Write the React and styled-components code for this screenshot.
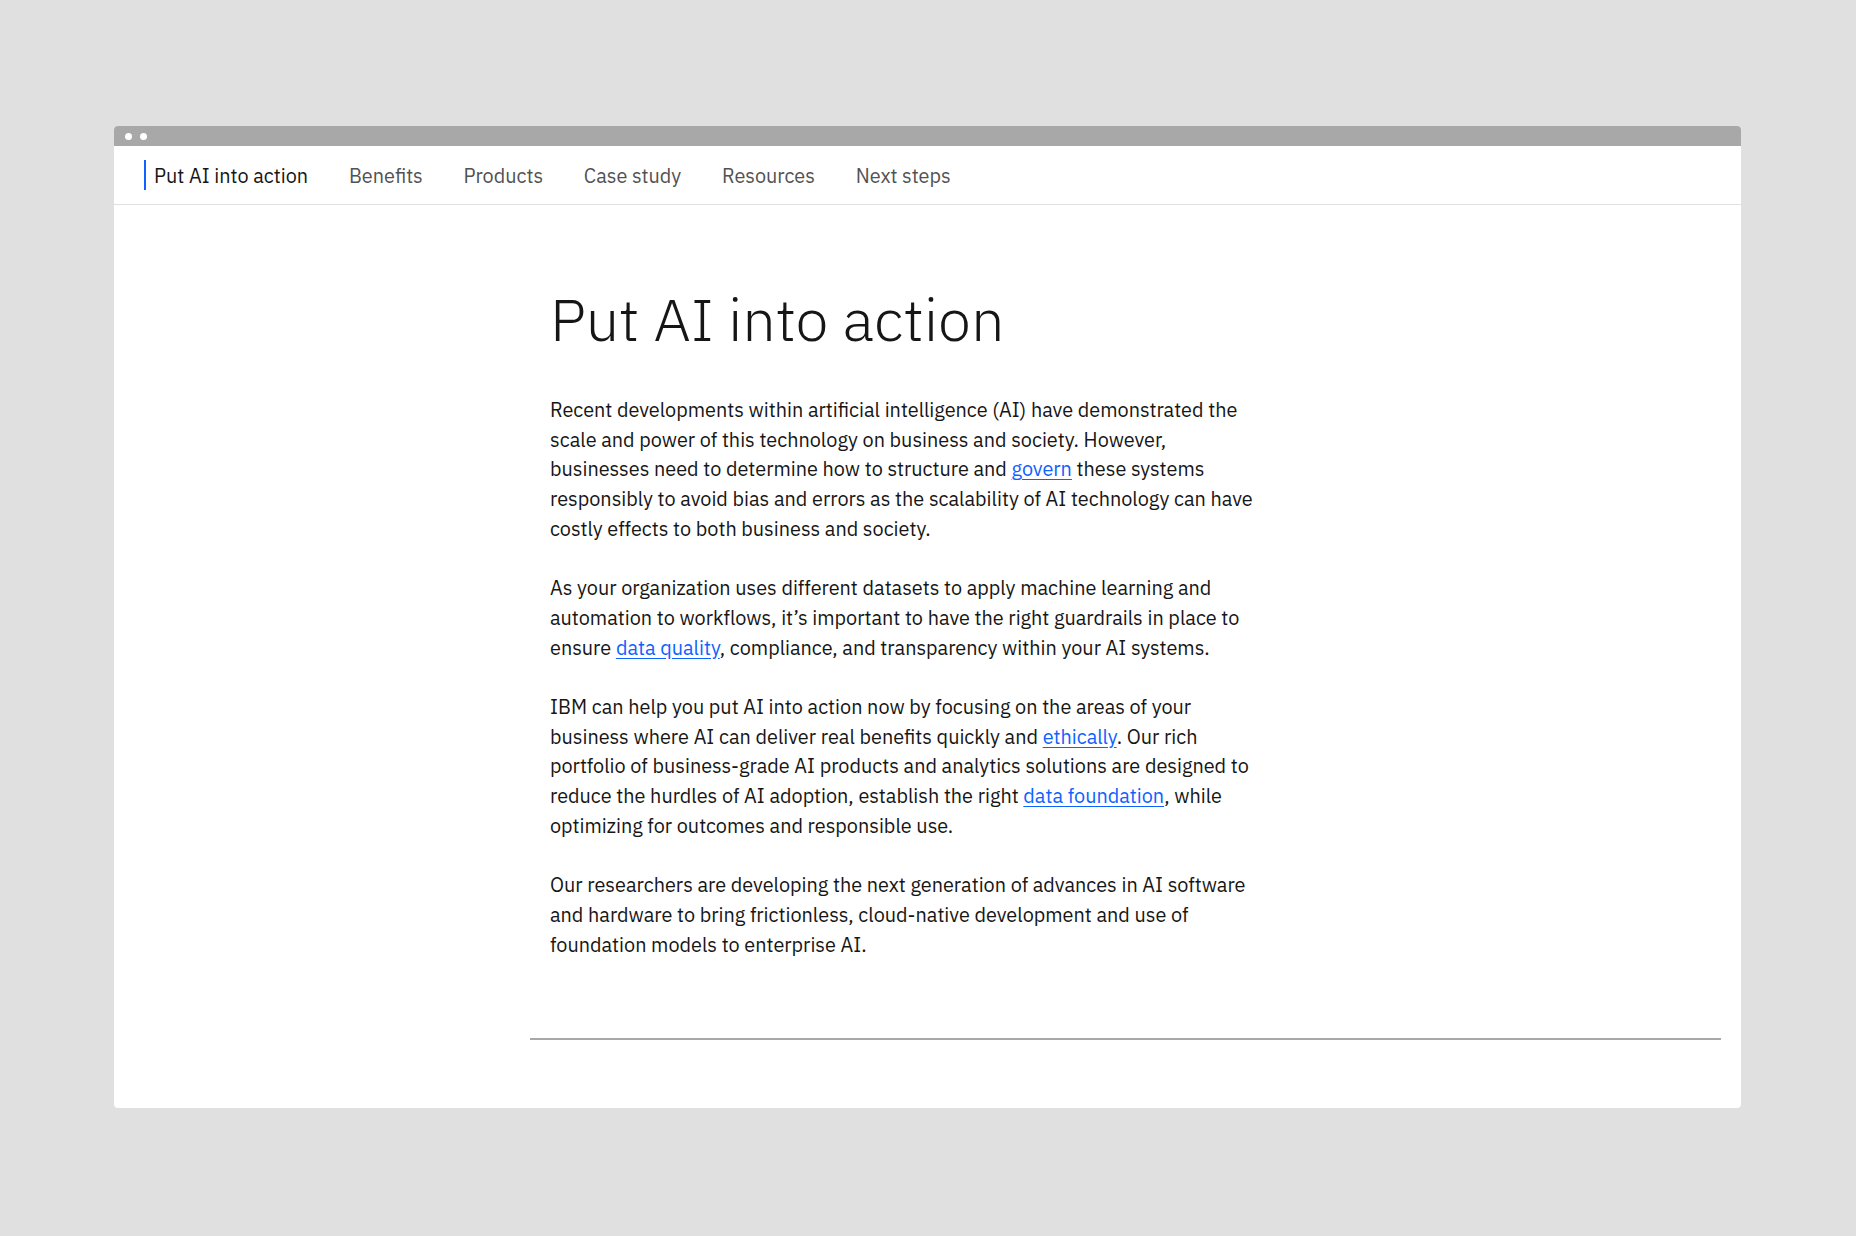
import React from 'react';
import styled, { createGlobalStyle } from 'styled-components';

const GlobalStyle = createGlobalStyle`
  html, body {
    margin: 0;
    padding: 0;
    background: #e0e0e0;
  }
  body {
    font-family: "IBM Plex Sans", Roboto, "Liberation Sans", sans-serif;
    color: #161616;
    -webkit-font-smoothing: antialiased;
  }
`;

const Page = styled.div`
  min-height: 1236px;
  padding: 126px 0 0 114px;
  box-sizing: border-box;
`;

const Window = styled.div`
  width: 1627px;
  background: #ffffff;
  border-radius: 4px;
  overflow: hidden;
`;

const TitleBar = styled.div`
  height: 20px;
  background: #a8a8a8;
  display: flex;
  align-items: center;
  gap: 8px;
  padding-left: 11px;
`;

const Dot = styled.span`
  width: 7px;
  height: 7px;
  border-radius: 50%;
  background: #ffffff;
`;

const Nav = styled.nav`
  height: 58px;
  border-bottom: 1px solid #e0e0e0;
  display: flex;
  align-items: center;
  padding-left: 30px;
`;

const NavItem = styled.a`
  display: flex;
  align-items: center;
  height: 30px;
  padding: 0 20.4px;
  font-size: 19.85px;
  color: ${(props) => (props.active ? '#161616' : '#525252')};
  text-decoration: none;
  border-left: ${(props) => (props.active ? '2px solid #0f62fe' : 'none')};
  padding-left: ${(props) => (props.active ? '8px' : '20.4px')};
  cursor: pointer;
`;

const Main = styled.main`
  display: grid;
  grid-template-columns: 416px 1fr;
  padding-right: 20px;
`;

const Article = styled.article`
  grid-column: 2;
  padding: 78px 0 79px 20px;
`;

const Title = styled.h1`
  margin: 0 0 40px;
  font-size: 59.6px;
  line-height: 72px;
  font-weight: 300;
  color: #161616;
`;

const Paragraph = styled.p`
  margin: 0 0 29.7px;
  font-size: 19.85px;
  line-height: 29.7px;
  white-space: nowrap;

  &:last-child {
    margin-bottom: 0;
  }
`;

const Link = styled.a`
  color: #0f62fe;
  text-decoration: underline;
  text-underline-offset: 3px;
`;

const Divider = styled.hr`
  grid-column: 2;
  margin: 0 0 68px;
  border: none;
  height: 2px;
  background: #a8a8a8;
`;

const navItems = ['Put AI into action', 'Benefits', 'Products', 'Case study', 'Resources', 'Next steps'];

export default function App() {
  return (
    <>
      <GlobalStyle />
      <Page>
        <Window>
          <TitleBar>
            <Dot />
            <Dot />
          </TitleBar>
          <Nav>
            {navItems.map((item, i) => (
              <NavItem key={item} active={i === 0}>
                {item}
              </NavItem>
            ))}
          </Nav>
          <Main>
            <Article>
              <Title>Put AI into action</Title>
              <Paragraph>
                Recent developments within artificial intelligence (AI) have demonstrated the
                <br />
                scale and power of this technology on business and society. However,
                <br />
                businesses need to determine how to structure and <Link>govern</Link> these systems
                <br />
                responsibly to avoid bias and errors as the scalability of AI technology can have
                <br />
                costly effects to both business and society.
              </Paragraph>
              <Paragraph>
                As your organization uses different datasets to apply machine learning and
                <br />
                automation to workflows, it’s important to have the right guardrails in place to
                <br />
                ensure <Link>data quality</Link>, compliance, and transparency within your AI systems.
              </Paragraph>
              <Paragraph>
                IBM can help you put AI into action now by focusing on the areas of your
                <br />
                business where AI can deliver real benefits quickly and <Link>ethically</Link>. Our rich
                <br />
                portfolio of business-grade AI products and analytics solutions are designed to
                <br />
                reduce the hurdles of AI adoption, establish the right <Link>data foundation</Link>, while
                <br />
                optimizing for outcomes and responsible use.
              </Paragraph>
              <Paragraph>
                Our researchers are developing the next generation of advances in AI software
                <br />
                and hardware to bring frictionless, cloud-native development and use of
                <br />
                foundation models to enterprise AI.
              </Paragraph>
            </Article>
            <Divider />
          </Main>
        </Window>
      </Page>
    </>
  );
}
